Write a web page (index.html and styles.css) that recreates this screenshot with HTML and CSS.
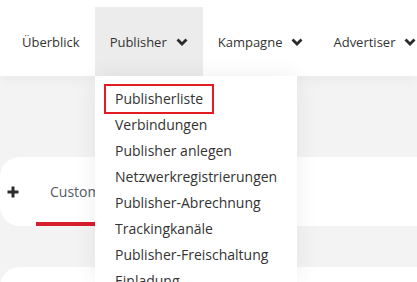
FILE: index.html
```html
<!DOCTYPE html>
<html lang="de">
<head>
<meta charset="utf-8">
<link rel="stylesheet" href="styles.css">
</head>
<body>
<header class="topbar">
  <nav class="nav">
    <a class="nav-item">Überblick</a>
    <a class="nav-item is-open">Publisher
      <svg class="chev" viewBox="0 0 12 8" width="12" height="8"><polyline points="1.5,1.5 6,6 10.5,1.5"/></svg>
    </a>
    <a class="nav-item">Kampagne
      <svg class="chev" viewBox="0 0 12 8" width="12" height="8"><polyline points="1.5,1.5 6,6 10.5,1.5"/></svg>
    </a>
    <a class="nav-item">Advertiser
      <svg class="chev" viewBox="0 0 12 8" width="12" height="8"><polyline points="1.5,1.5 6,6 10.5,1.5"/></svg>
    </a>
  </nav>
</header>

<main class="content">
  <section class="card tabs-card">
    <button class="add-btn" aria-label="Hinzufügen">
      <svg viewBox="0 0 12 12" width="12" height="12"><path d="M6 0.5v11M0.5 6h11"/></svg>
    </button>
    <div class="tab active">Custom Reports</div>
  </section>
  <section class="card second-card"></section>
</main>

<div class="dropdown">
  <a class="dd-item active">Publisherliste</a>
  <a class="dd-item">Verbindungen</a>
  <a class="dd-item">Publisher anlegen</a>
  <a class="dd-item">Netzwerkregistrierungen</a>
  <a class="dd-item">Publisher-Abrechnung</a>
  <a class="dd-item">Trackingkanäle</a>
  <a class="dd-item">Publisher-Freischaltung</a>
  <a class="dd-item">Einladung</a>
</div>
</body>
</html>
```

FILE: styles.css
```css
* { box-sizing: border-box; }
html, body {
  margin: 0;
  padding: 0;
  height: 100%;
  overflow: hidden;
}
body {
  font-family: "Open Sans", "Noto Sans", sans-serif;
  background: #f3f3f3;
  color: #333;
  position: relative;
}
.topbar {
  height: 76px;
  background: #fff;
  box-shadow: 0 2px 14px rgba(0,0,0,0.05);
  position: relative;
  z-index: 1;
}
.nav {
  display: flex;
  height: 100%;
  padding: 7px 0 0 7px;
}
.nav-item {
  display: flex;
  align-items: center;
  padding: 0 15px;
  font-size: 13px;
  color: #333;
  white-space: nowrap;
}
.nav-item.is-open { background: #ececec; }
.chev {
  margin-left: 9px;
  fill: none;
  stroke: #2b2b2b;
  stroke-width: 2.8;
  stroke-linecap: butt;
  stroke-linejoin: miter;
}
.content {
  padding-top: 81px;
  display: flex;
  flex-direction: column;
  gap: 41px;
}
.card {
  background: #fff;
  border-radius: 20px 0 0 20px;
  margin-right: -30px;
}
.tabs-card {
  height: 69px;
  display: flex;
  align-items: stretch;
}
.add-btn {
  border: 0;
  background: none;
  padding: 0 0 0 7px;
  width: 36px;
  display: flex;
  align-items: center;
}
.add-btn svg {
  fill: none;
  stroke: #2b2b2b;
  stroke-width: 3;
}
.tab {
  display: flex;
  align-items: center;
  padding: 4px 14px 0;
  font-size: 14px;
  color: #555a66;
  border-bottom: 4px solid #d81e2a;
}
.second-card { height: 40px; }
.dropdown {
  position: absolute;
  left: 95px;
  top: 76px;
  width: 202px;
  bottom: 0;
  background: #fff;
  box-shadow: 0 0 22px rgba(0,0,0,0.07);
  padding: 10px 0 0 11px;
  z-index: 2;
  display: flex;
  flex-direction: column;
  align-items: flex-start;
}
.dd-item {
  display: block;
  padding: 0 9px;
  font-size: 14px;
  line-height: 26px;
  height: 26px;
  color: #333;
  white-space: nowrap;
}
.dd-item.active {
  outline: 2.5px solid #e31b23;
  outline-offset: -0.5px;
}
```
